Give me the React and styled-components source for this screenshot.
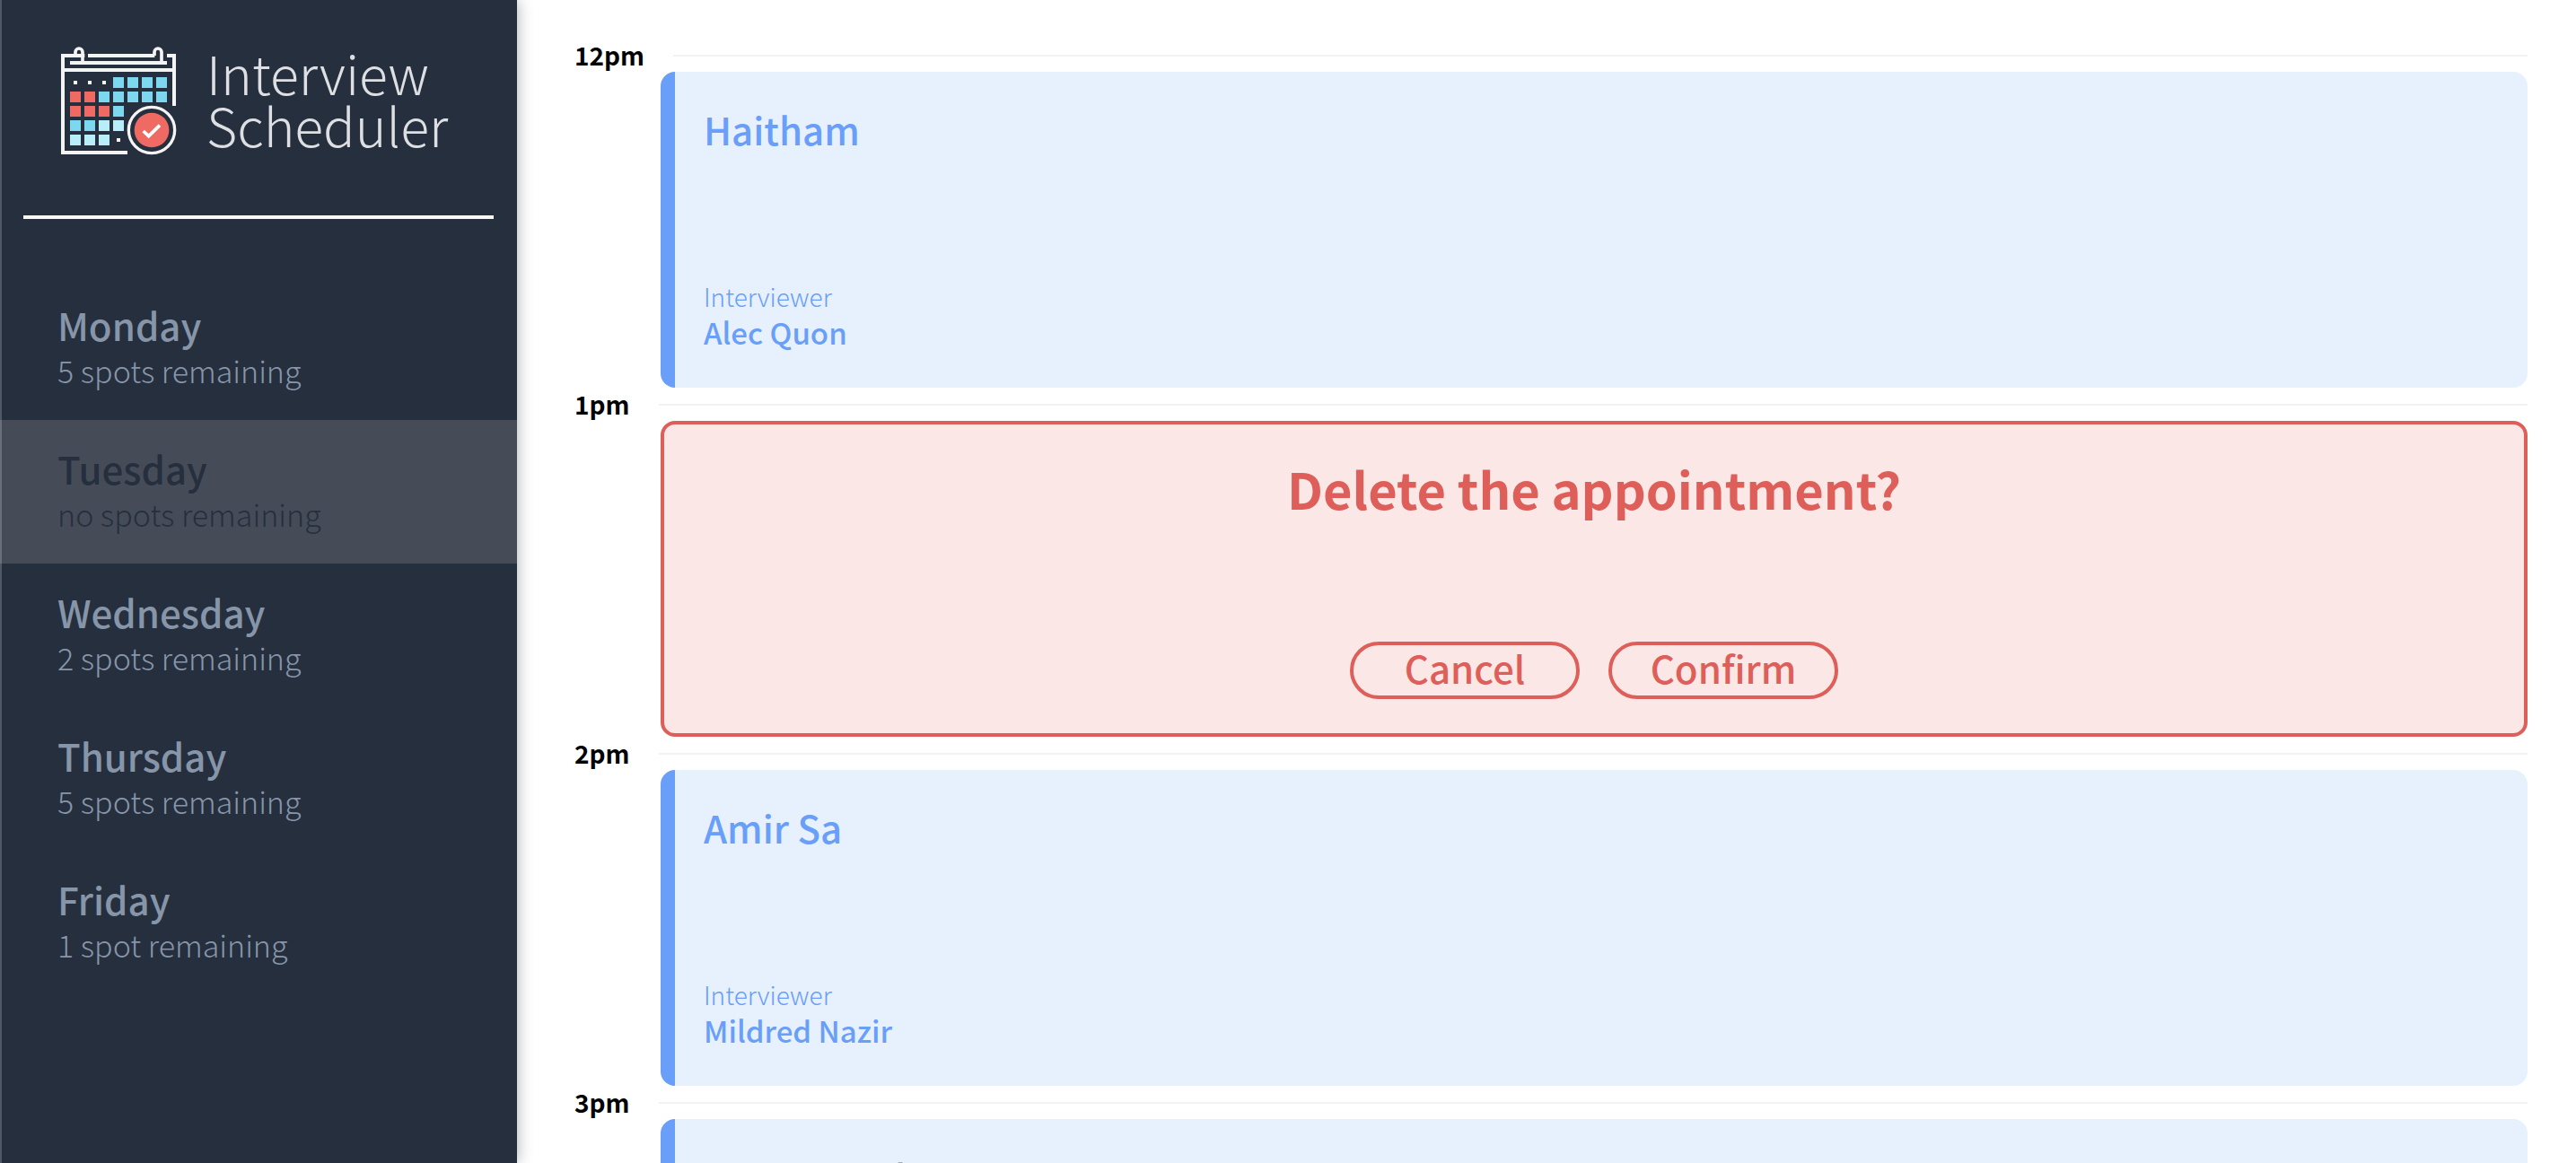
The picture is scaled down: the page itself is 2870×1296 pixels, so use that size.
import React, { useState } from "react";
import styled, { createGlobalStyle } from "styled-components";

const GlobalStyle = createGlobalStyle`
  *, *::before, *::after { box-sizing: border-box; }
  body {
    margin: 0;
    background: #fff;
    font-family: "Noto Sans CJK JP", "Noto Sans CJK SC", "Open Sans", sans-serif;
  }
  h1, h2, h3, p, ul { margin: 0; padding: 0; }
  button { font-family: inherit; cursor: pointer; }
`;

const Layout = styled.div`
  display: flex;
  height: 100vh;
  overflow: hidden;
`;

const Sidebar = styled.aside`
  position: relative;
  z-index: 1;
  flex: 0 0 576px;
  background: #252f3e;
  box-shadow: 0 0 16px rgba(37, 47, 62, 0.4);

  &::before {
    content: "";
    position: absolute;
    z-index: 1;
    top: 0;
    bottom: 0;
    left: 0;
    width: 2px;
    background: rgba(255, 255, 255, 0.2);
  }
`;

const Brand = styled.header`
  display: flex;
  gap: 33px;
  margin: 0 26px;
  padding: 52px 0 0 42px;
  height: 244px;
  border-bottom: 4px solid #f8f8f5;
`;

const BrandIcon = styled.svg`
  flex: none;
  width: 129px;
  height: 121px;
`;

const BrandName = styled.h1`
  color: #dedfe3;
  font-size: 59px;
  line-height: 58px;
  font-weight: 200;
`;

const DayList = styled.ul`
  list-style: none;
  margin-top: 64px;
`;

const DayButton = styled.button`
  display: block;
  width: 100%;
  height: 160px;
  padding: 29px 64px;
  border: 0;
  text-align: left;
  background: ${(p) => (p.$full ? "#454c58" : "transparent")};
  color: ${(p) => (p.$full ? "#252f3e" : "#8795a9")};
`;

const DayName = styled.span`
  display: block;
  font-size: 42px;
  line-height: 50px;
  font-weight: 500;
`;

const DaySpots = styled.span`
  display: block;
  font-size: 34px;
  line-height: 52px;
  font-weight: 300;
`;

const Schedule = styled.main`
  flex: 1;
  min-width: 0;
  overflow: hidden;
  padding: 43px 54px 0 64px;
`;

const SlotHeader = styled.header`
  display: flex;
  align-items: center;
  gap: 32px;
  height: 37px;
`;

const SlotTime = styled.h2`
  font-size: 28px;
  line-height: 37px;
  font-weight: 700;
  color: #000;
`;

const SlotRule = styled.hr`
  flex: 1;
  margin: 0;
  border: 0;
  height: 2px;
  background: #f2f2f2;
`;

const Card = styled.section`
  display: flex;
  flex-direction: column;
  justify-content: space-between;
  height: 352px;
  margin-left: 96px;
  border-radius: 16px;
`;

const BookedCard = styled(Card)`
  padding: 39px 32px 41px;
  border-left: 16px solid #699ef9;
  background: #e7f1fe;
  color: #699ef9;
`;

const Student = styled.h3`
  font-size: 42px;
  line-height: 50px;
  font-weight: 500;
`;

const InterviewerLabel = styled.p`
  font-size: 28px;
  line-height: 38px;
  font-weight: 300;
`;

const InterviewerName = styled.p`
  font-size: 33px;
  line-height: 42px;
  font-weight: 500;
`;

const ConfirmCard = styled(Card)`
  align-items: center;
  padding: 36px 32px 38px;
  border: 4px solid #de5e59;
  background: #fbe7e6;
  color: #de5e59;
`;

const ConfirmMessage = styled.h3`
  font-size: 56px;
  line-height: 70px;
  font-weight: 700;
`;

const Actions = styled.div`
  display: flex;
  gap: 32px;
`;

const ActionButton = styled.button`
  width: 256px;
  height: 64px;
  padding: 0 0 6px;
  border: 4px solid #de5e59;
  border-radius: 32px;
  background: transparent;
  color: #de5e59;
  font-size: 42px;
  line-height: 50px;
  font-weight: 500;
`;

const BLUE = "#7dd8ef";
const RED = "#ef6a62";
const PALE = "#b7eefa";
const CELLS = [
  [null, null, null, BLUE, BLUE, BLUE, BLUE],
  [RED, RED, BLUE, BLUE, BLUE, BLUE, BLUE],
  [RED, RED, RED, BLUE],
  [BLUE, BLUE, PALE, PALE],
  [PALE, PALE, PALE, null],
];

function Calendar() {
  return (
    <BrandIcon viewBox="54 36 387 363" aria-hidden="true">
      <g fill="none" stroke="#f4f4f4" strokeWidth="12">
        <path d="M133 66H60V390H276" />
        <path d="M144 66H367M408 66H432V234" />
        <path d="M60 114H432M84 90H408" />
        <path d="M102 66V54a12 12 0 0 1 24 0V90" strokeWidth="11" />
        <path d="M366 66V54a12 12 0 0 1 24 0V90" strokeWidth="11" />
        <circle cx="357" cy="315" r="77" strokeWidth="10" />
      </g>
      {CELLS.map((row, r) =>
        row.map((fill, c) =>
          fill ? (
            <rect key={`${r}-${c}`} x={84 + c * 48} y={138 + r * 48} width="36" height="36" fill={fill} />
          ) : (
            <rect key={`${r}-${c}`} x={96 + c * 48} y={150 + r * 48} width="12" height="12" fill="#f4f4f4" />
          )
        )
      )}
      <circle cx="357" cy="315" r="58" fill={RED} />
      <path d="M329 318L347 335L384 299" fill="none" stroke="#fff" strokeWidth="11" />
    </BrandIcon>
  );
}

const DAYS = [
  { name: "Monday", spots: 5 },
  { name: "Tuesday", spots: 0 },
  { name: "Wednesday", spots: 2 },
  { name: "Thursday", spots: 5 },
  { name: "Friday", spots: 1 },
];

const SLOTS = [
  { time: "12pm", student: "Haitham", interviewer: "Alec Quon" },
  { time: "1pm", confirming: true },
  { time: "2pm", student: "Amir Sa", interviewer: "Mildred Nazir" },
  { time: "3pm", student: "Jamal Jordan" },
];

function spotsText(spots) {
  if (spots === 0) return "no spots remaining";
  return spots === 1 ? "1 spot remaining" : `${spots} spots remaining`;
}

function Slot({ slot }) {
  return (
    <article>
      <SlotHeader>
        <SlotTime>{slot.time}</SlotTime>
        <SlotRule />
      </SlotHeader>
      {slot.confirming ? (
        <ConfirmCard>
          <ConfirmMessage>Delete the appointment?</ConfirmMessage>
          <Actions>
            <ActionButton type="button">Cancel</ActionButton>
            <ActionButton type="button">Confirm</ActionButton>
          </Actions>
        </ConfirmCard>
      ) : (
        <BookedCard>
          <Student>{slot.student}</Student>
          {slot.interviewer && (
            <div>
              <InterviewerLabel>Interviewer</InterviewerLabel>
              <InterviewerName>{slot.interviewer}</InterviewerName>
            </div>
          )}
        </BookedCard>
      )}
    </article>
  );
}

export default function App() {
  const [, setDay] = useState("Monday");
  return (
    <>
      <GlobalStyle />
      <Layout>
        <Sidebar>
          <Brand>
            <Calendar />
            <BrandName>
              Interview
              <br />
              Scheduler
            </BrandName>
          </Brand>
          <nav aria-label="Days">
            <DayList>
              {DAYS.map((day) => (
                <li key={day.name}>
                  <DayButton type="button" $full={day.spots === 0} onClick={() => setDay(day.name)}>
                    <DayName>{day.name}</DayName>
                    <DaySpots>{spotsText(day.spots)}</DaySpots>
                  </DayButton>
                </li>
              ))}
            </DayList>
          </nav>
        </Sidebar>
        <Schedule>
          {SLOTS.map((slot) => (
            <Slot key={slot.time} slot={slot} />
          ))}
        </Schedule>
      </Layout>
    </>
  );
}
